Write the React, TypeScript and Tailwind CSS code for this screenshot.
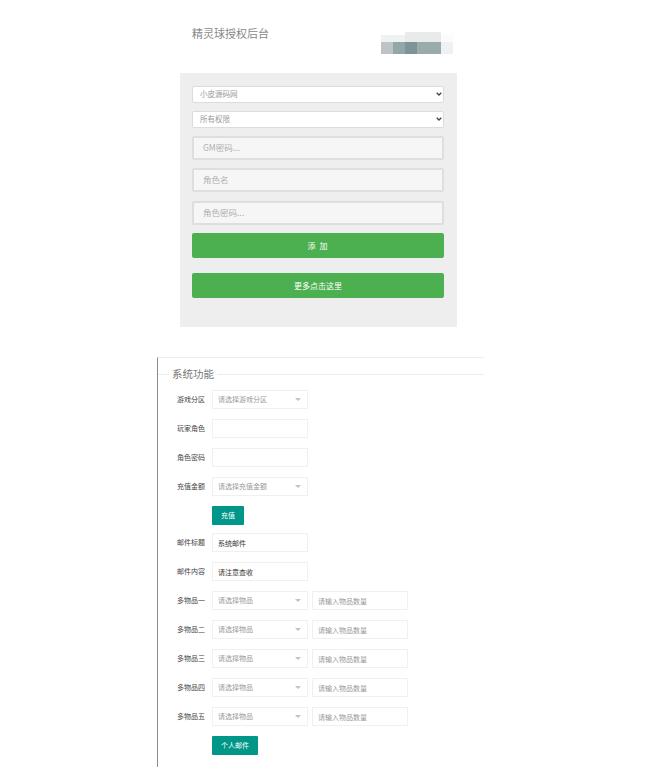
const FONT = "font-['Noto_Sans_CJK_SC','Liberation_Sans',sans-serif]";

function BlurredLogo() {
  return (
    <svg width="72" height="22" viewBox="0 0 72 22" className="block">
      <rect x="0" y="3" width="24" height="7" fill="#f0f1f1" />
      <rect x="24" y="0" width="36" height="10" fill="#e9ebeb" />
      <rect x="60" y="3" width="12" height="7" fill="#fbfbfb" />
      <rect x="0" y="10" width="12" height="12" fill="#bcc4c4" />
      <rect x="12" y="10" width="12" height="12" fill="#93a6a8" />
      <rect x="24" y="10" width="12" height="12" fill="#7f9497" />
      <rect x="36" y="10" width="24" height="12" fill="#9aabac" />
      <rect x="60" y="10" width="12" height="12" fill="#eef2f5" />
    </svg>
  );
}

function PanelSelect({ value }: { value: string }) {
  return (
    <div className="relative h-[17px]">
      <select
        defaultValue={value}
        className="block h-[17px] w-full appearance-none rounded-[2px] border border-[#dcdcdc] bg-white pb-[1px] pl-[7px] text-[7.5px] text-[#999]"
      >
        <option>{value}</option>
      </select>
      <svg width="6" height="4" viewBox="0 0 6 4" className="absolute top-[6px] right-[2.5px]">
        <path d="M0.7 0.7 L3 3 L5.3 0.7" fill="none" stroke="#444" strokeWidth="1.3" />
      </svg>
    </div>
  );
}

function PanelInput({ placeholder }: { placeholder: string }) {
  return (
    <input
      placeholder={placeholder}
      className="h-[24px] w-full rounded-[2px] border-2 border-[#dedede] bg-[#f6f6f6] px-[9px] pb-[2px] text-[8.5px] placeholder:text-[#b0b0b0]"
    />
  );
}

function GreenButton({ children, className = '' }: { children: string; className?: string }) {
  return (
    <button
      className={`flex h-[25px] w-full items-center justify-center rounded-[2px] bg-[#4caf50] text-[8px] text-white ${className}`}
    >
      {children}
    </button>
  );
}

function Row({ label, children }: { label: string; children: React.ReactNode }) {
  return (
    <div className="flex h-[19px] items-center">
      <label className="w-[48px] pr-[7px] text-right text-[7px] whitespace-nowrap text-[#444]">{label}</label>
      {children}
    </div>
  );
}

function FakeSelect({ placeholder }: { placeholder: string }) {
  return (
    <div className="flex h-[19px] w-[96px] items-center justify-between border border-[#f0f0f0] bg-white pr-[6px] pl-[5px] text-[7px] text-[#999]">
      <span>{placeholder}</span>
      <span className="h-0 w-0 border-x-[3px] border-t-[3px] border-x-transparent border-t-[#c2c2c2]" />
    </div>
  );
}

function TextBox({ value, placeholder, className = '' }: { value?: string; placeholder?: string; className?: string }) {
  return (
    <input
      defaultValue={value}
      placeholder={placeholder}
      className={`h-[19px] w-[96px] border border-[#f0f0f0] bg-white px-[5px] text-[7px] text-[#333] placeholder:text-[#999] ${className}`}
    />
  );
}

function ItemRow({ label }: { label: string }) {
  return (
    <Row label={label}>
      <FakeSelect placeholder="请选择物品" />
      <TextBox placeholder="请输入物品数量" className="ml-[4px]" />
    </Row>
  );
}

export default function App() {
  return (
    <div className={`${FONT} h-[773px] w-[649px] overflow-hidden bg-white`}>
      <div className="ml-[192px] flex h-[73px] w-[261px] items-start justify-between pt-[26px]">
        <h1 className="text-[11px] leading-[15px] text-[#888]">精灵球授权后台</h1>
        <div className="mt-[6px]">
          <BlurredLogo />
        </div>
      </div>

      <div className="ml-[180px] h-[254px] w-[277px] bg-[#eeeeee] pt-[13px] pr-[13px] pl-[12px]">
        <div className="flex flex-col gap-[8px]">
          <PanelSelect value="小皮源码网" />
          <PanelSelect value="所有权限" />
        </div>
        <div className="mt-[8px] flex flex-col gap-[8.4px]">
          <PanelInput placeholder="GM密码..." />
          <PanelInput placeholder="角色名" />
          <PanelInput placeholder="角色密码..." />
          <GreenButton className="tracking-[1px]">添 加</GreenButton>
        </div>
        <div className="mt-[15px]">
          <GreenButton>更多点击这里</GreenButton>
        </div>
      </div>

      <div className="mt-[30px] ml-[157px] h-[410px] w-[327px] border-t border-l border-t-[#ececec] border-l-[#8c8c8c]">
        <div className="flex h-[33px] items-center pb-[1px]">
          <div className="h-px w-[11px] bg-[#ececec]" />
          <span className="px-[3px] text-[10.5px] text-[#777]">系统功能</span>
          <div className="h-px flex-1 bg-[#ececec]" />
        </div>
        <div className="mt-[-1px] flex flex-col gap-[10px] pl-[6px]">
          <Row label="游戏分区">
            <FakeSelect placeholder="请选择游戏分区" />
          </Row>
          <Row label="玩家角色">
            <TextBox />
          </Row>
          <Row label="角色密码">
            <TextBox />
          </Row>
          <Row label="充值金额">
            <FakeSelect placeholder="请选择充值金额" />
          </Row>
          <div className="flex pl-[48px]">
            <button className="h-[19px] w-[32px] rounded-[1px] bg-[#009688] text-[7px] text-white">充值</button>
          </div>
        </div>
        <div className="mt-[8px] flex flex-col gap-[10px] pl-[6px]">
          <Row label="邮件标题">
            <TextBox value="系统邮件" />
          </Row>
          <Row label="邮件内容">
            <TextBox value="请注意查收" />
          </Row>
          <ItemRow label="多物品一" />
          <ItemRow label="多物品二" />
          <ItemRow label="多物品三" />
          <ItemRow label="多物品四" />
          <ItemRow label="多物品五" />
          <div className="flex pl-[48px]">
            <button className="h-[19px] w-[46px] rounded-[1px] bg-[#009688] text-[7px] text-white">个人邮件</button>
          </div>
        </div>
      </div>
    </div>
  );
}
